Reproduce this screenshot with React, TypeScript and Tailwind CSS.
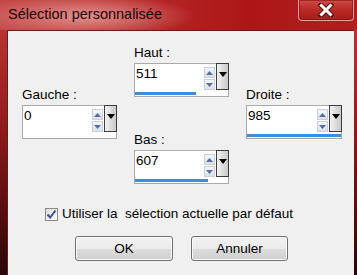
import React from "react";

function SpinBox({ value, pct }: { value: string; pct: number }) {
  return (
    <div className="flex h-[34px] w-full flex-col border border-[#a9a9a9] bg-white">
      <div className="flex h-[27px]">
        <div className="flex-1 pl-[1px] pt-[2px] text-[13.5px] leading-[16px] text-black">{value}</div>
        <div className="mt-[3px] flex w-[11px] flex-col gap-[1px]">
          <div className="flex h-[11px] items-center justify-center border border-[#c8d0dc] bg-[linear-gradient(180deg,#f4f7fb,#d9e1ec)]">
            <svg width="7" height="4" viewBox="0 0 7 4"><path d="M0 4 L3.5 0 L7 4 Z" fill="#5a6c9c" /></svg>
          </div>
          <div className="flex h-[11px] items-center justify-center border border-[#c8d0dc] bg-[linear-gradient(180deg,#f4f7fb,#d9e1ec)]">
            <svg width="7" height="4" viewBox="0 0 7 4"><path d="M0 0 L3.5 4 L7 0 Z" fill="#5a6c9c" /></svg>
          </div>
        </div>
        <div className="ml-[1px] mt-[-1px] mr-[-1px] flex h-[27px] w-[13px] justify-center border border-[#3c3c3c] bg-[linear-gradient(90deg,#f2f2f2,#c9c9c9)] pt-[8px]">
          <svg width="8" height="5" viewBox="0 0 8 5"><path d="M0 0 L4 5 L8 0 Z" fill="#000" /></svg>
        </div>
      </div>
      <div className="mt-[1px] h-[3px] w-full">
        <div className="h-full bg-[#3a8ee0]" style={{ width: `${pct}%` }} />
      </div>
    </div>
  );
}

function Field({ label, value, pct }: { label: string; value: string; pct: number }) {
  return (
    <div className="flex flex-col">
      <div className="h-[16px] text-[13.5px] leading-[16px] text-black">{label}</div>
      <div className="mt-[2px]">
        <SpinBox value={value} pct={pct} />
      </div>
    </div>
  );
}

export default function App() {
  return (
    <div className="relative h-[275px] w-[357px] overflow-hidden bg-[linear-gradient(180deg,#c23a3a_0%,#9a1e1e_40%,#5a0e0e_75%,#2a0606_100%)] font-['Liberation_Sans',Arial,sans-serif]">
      {/* title bar */}
      <div className="flex h-[30px] items-start bg-[radial-gradient(ellipse_110px_22px_at_85px_16px,rgba(235,160,160,0.85),rgba(235,160,160,0)_100%),linear-gradient(90deg,#c44848_0%,#b52424_45%,#ac1616_70%,#b21e1e_100%)]">
        <div className="pl-[8px] pt-[5px] text-[14.5px] leading-[18px] text-[#1a0606]">Sélection personnalisée</div>
        <div className="flex-1" />
        <div className="mr-[3px] flex h-[21px] w-[56px] items-center justify-center rounded-b-[4px] border border-t-0 border-[#e79a9a] bg-[linear-gradient(180deg,#d24a46,#b82a26_50%,#a81a18)] shadow-[inset_0_0_0_1px_rgba(120,20,20,0.6)]">
          <svg width="16" height="14" viewBox="0 0 16 14">
            <path d="M3 2 L13 12 M13 2 L3 12" stroke="#5a1212" strokeWidth="5" strokeLinecap="square" />
            <path d="M3.5 2.5 L12.5 11.5 M12.5 2.5 L3.5 11.5" stroke="#ffffff" strokeWidth="3" strokeLinecap="square" />
          </svg>
        </div>
      </div>
      {/* client area */}
      <div className="ml-[7px] mr-[3px] h-[245px] border-l border-t border-[#6a1a1a] bg-[#f0f0f0] text-black">
        <div className="flex pl-[14px] pr-[12px]">
          <div className="w-[95px] pt-[56px]">
            <Field label="Gauche :" value="0" pct={0} />
          </div>
          <div className="ml-[17px] w-[95px] pt-[14px]">
            <Field label="Haut :" value="511" pct={66} />
            <div className="mt-[35px]">
              <Field label="Bas :" value="607" pct={78} />
            </div>
          </div>
          <div className="ml-[17px] w-[96px] pt-[56px]">
            <Field label="Droite :" value="985" pct={100} />
          </div>
        </div>
        {/* checkbox */}
        <div className="mt-[22px] flex items-center pl-[37px]">
          <div className="flex h-[13px] w-[13px] items-center justify-center border border-[#8a8a8a] bg-[linear-gradient(135deg,#dcdcdc,#ffffff)]">
            <svg width="11" height="11" viewBox="0 0 11 11">
              <path d="M1.5 5.5 L4.2 8.5 L9.5 1.5" stroke="#3a4f8e" strokeWidth="2" fill="none" />
            </svg>
          </div>
          <span className="ml-[4px] whitespace-pre text-[13.5px] leading-[16px]">Utiliser la  sélection actuelle par défaut</span>
        </div>
        {/* buttons */}
        <div className="mt-[14px] flex pl-[67px]">
          <button className="flex h-[25px] w-[98px] items-center justify-center rounded-[3px] border border-[#707070] bg-[linear-gradient(180deg,#f2f2f2_0%,#ebebeb_50%,#dddddd_51%,#cfcfcf_100%)] text-[13.5px] leading-[16px] shadow-[inset_0_0_0_1px_#fbfbfb]">
            OK
          </button>
          <button className="ml-[18px] flex h-[25px] w-[97px] items-center justify-center rounded-[3px] border border-[#707070] bg-[linear-gradient(180deg,#f2f2f2_0%,#ebebeb_50%,#dddddd_51%,#cfcfcf_100%)] text-[13.5px] leading-[16px] shadow-[inset_0_0_0_1px_#fbfbfb]">
            Annuler
          </button>
        </div>
      </div>
    </div>
  );
}
